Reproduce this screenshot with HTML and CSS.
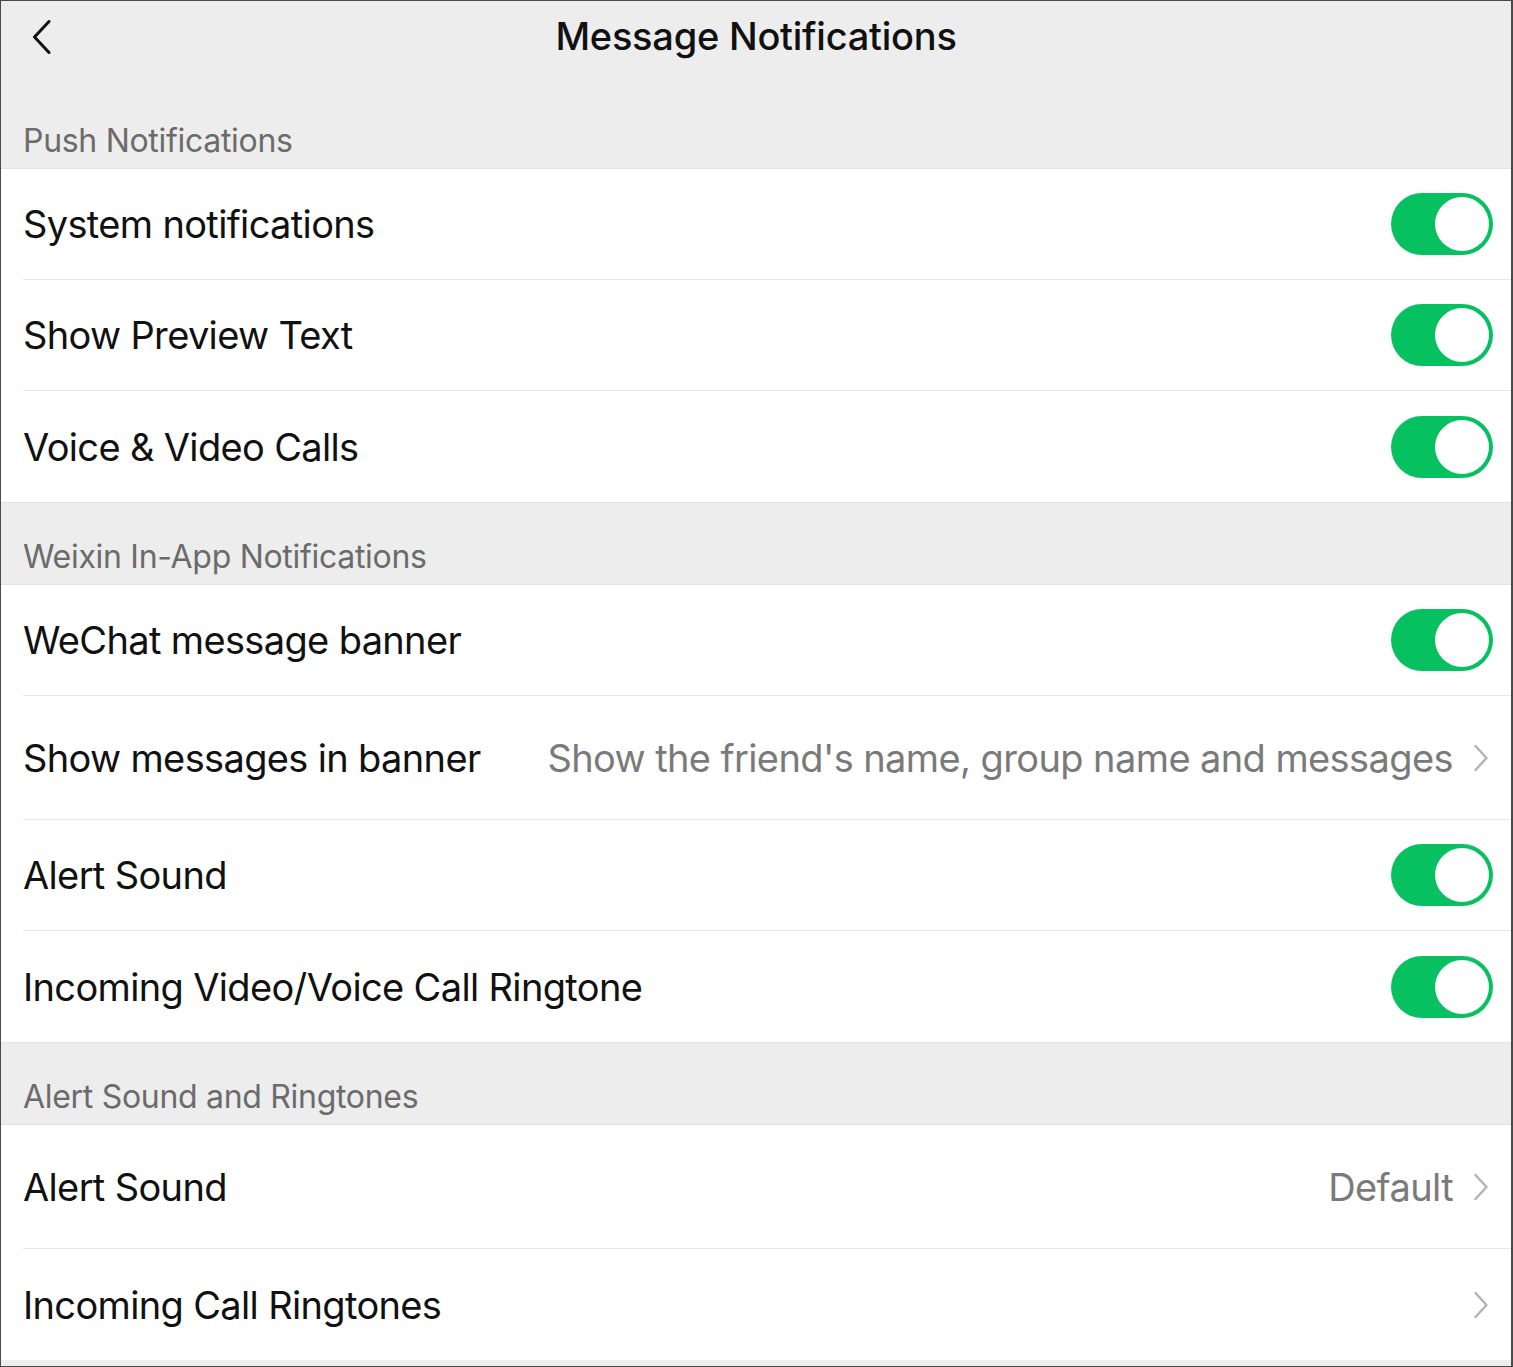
FILE: index.html
```html
<!DOCTYPE html>
<html lang="en">

<head>
    <meta charset="UTF-8">
    <meta name="viewport" content="width=device-width, initial-scale=1.0">
    <title>Message Notifications</title>
    <link rel="stylesheet" href="styles.css">
</head>

<body>
    <div class="screen">
        <header class="navbar">
            <span class="back">
                <svg width="20" height="34" viewBox="0 0 20 34"><path d="M17 1.5 L2.5 17 L17 32.5" fill="none" stroke="#111" stroke-width="3" stroke-linecap="round" stroke-linejoin="round"/></svg>
            </span>
            <h1>Message Notifications</h1>
        </header>

        <div class="group-title first">Push Notifications</div>
        <div class="group">
            <div class="cell">
                <span class="label">System notifications</span>
                <span class="switch on"></span>
            </div>
            <div class="cell">
                <span class="label">Show Preview Text</span>
                <span class="switch on"></span>
            </div>
            <div class="cell">
                <span class="label">Voice &amp; Video Calls</span>
                <span class="switch on"></span>
            </div>
        </div>

        <div class="group-title">Weixin In-App Notifications</div>
        <div class="group">
            <div class="cell">
                <span class="label">WeChat message banner</span>
                <span class="switch on"></span>
            </div>
            <div class="cell link">
                <span class="label">Show messages in banner</span>
                <span class="value">Show the friend's name, group name and messages</span>
                <svg class="arrow" width="16" height="28" viewBox="0 0 16 28"><path d="M2.5 2 L13.5 14 L2.5 26" fill="none" stroke="#b4b4b4" stroke-width="2.5" stroke-linecap="round" stroke-linejoin="round"/></svg>
            </div>
            <div class="cell">
                <span class="label">Alert Sound</span>
                <span class="switch on"></span>
            </div>
            <div class="cell">
                <span class="label">Incoming Video/Voice Call Ringtone</span>
                <span class="switch on"></span>
            </div>
        </div>

        <div class="group-title">Alert Sound and Ringtones</div>
        <div class="group">
            <div class="cell link">
                <span class="label">Alert Sound</span>
                <span class="value">Default</span>
                <svg class="arrow" width="16" height="28" viewBox="0 0 16 28"><path d="M2.5 2 L13.5 14 L2.5 26" fill="none" stroke="#b4b4b4" stroke-width="2.5" stroke-linecap="round" stroke-linejoin="round"/></svg>
            </div>
            <div class="cell link last">
                <span class="label">Incoming Call Ringtones</span>
                <svg class="arrow" width="16" height="28" viewBox="0 0 16 28"><path d="M2.5 2 L13.5 14 L2.5 26" fill="none" stroke="#b4b4b4" stroke-width="2.5" stroke-linecap="round" stroke-linejoin="round"/></svg>
            </div>
        </div>
    </div>
</body>

</html>
```

FILE: styles.css
```css
* {
    box-sizing: border-box;
}

body {
    margin: 0;
    font-family: Inter, "Noto Sans", Arial, sans-serif;
    color: #111;
}

.screen {
    width: 1513px;
    height: 1367px;
    background-color: #ededed;
    border: 1px solid #4a4a4a;
    border-right-width: 2px;
    overflow: hidden;
}

.navbar {
    position: relative;
    height: 88px;
    display: flex;
    justify-content: center;
    padding-top: 12px;
}

.navbar h1 {
    margin: 0;
    font-size: 38px;
    font-weight: 500;
    line-height: 46px;
    letter-spacing: -0.25px;
}

.back {
    position: absolute;
    left: 31px;
    top: 19px;
}

.group-title {
    height: 83px;
    display: flex;
    align-items: flex-end;
    padding: 0 0 8px 22px;
    font-size: 32px;
    color: #6b6b6b;
    letter-spacing: -0.3px;
    border-top: 1px solid #e2e2e2;
    border-bottom: 1px solid #e2e2e2;
}

.group-title.first {
    height: 80px;
    border-top: none;
}

.group {
    background-color: white;
    padding-left: 22px;
}

.cell {
    display: flex;
    align-items: center;
    height: 111px;
    padding-right: 18px;
    border-bottom: 1px solid #e5e5e5;
}

.cell:last-child {
    border-bottom: none;
}

.cell.link {
    height: 124px;
    padding-right: 22px;
}

.cell.link.last {
    height: 111px;
}

.label {
    flex: 1;
    font-size: 38px;
    letter-spacing: -0.65px;
    white-space: nowrap;
}

.value {
    font-size: 38px;
    color: #7a7a7a;
    letter-spacing: -0.6px;
    margin-right: 20px;
    white-space: nowrap;
}

.switch {
    position: relative;
    width: 102px;
    height: 62px;
    border-radius: 31px;
    background-color: #07c160;
}

.switch::after {
    content: "";
    position: absolute;
    top: 4px;
    right: 4px;
    width: 54px;
    height: 54px;
    border-radius: 50%;
    background-color: white;
}
```
